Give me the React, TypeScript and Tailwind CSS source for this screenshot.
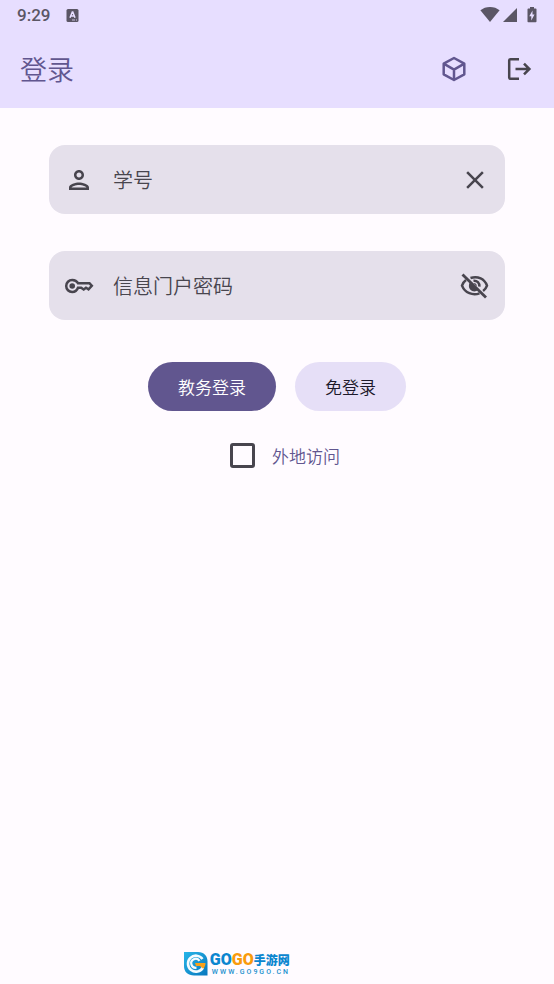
import { useState } from 'react';
import type { ReactNode } from 'react';

const ICONS = {
  person:
    'M12 6c1.100 0 2 .9 2 2s-.9 2-2 2-2-.9-2-2 .9-2 2-2m0 10c2.700 0 5.800 1.290 6 2H6c.23-.72 3.310-2 6-2m0-12C9.790 4 8 5.790 8 8s1.790 4 4 4 4-1.790 4-4-1.790-4-4-4zm0 10c-2.670 0-8 1.340-8 4v2h16v-2c0-2.660-5.330-4-8-4z',
  close:
    'M19 6.410 17.590 5 12 10.590 6.410 5 5 6.410 10.590 12 5 17.590 6.410 19 12 13.410 17.590 19 19 17.590 13.410 12z'
};

function App() {
  const [studentId, setStudentId] = useState('');
  const [password, setPassword] = useState('');
  const [showPassword, setShowPassword] = useState(false);
  const [remote, setRemote] = useState(false);

  return (
    <div className="flex min-h-screen flex-col bg-[#fffbff] font-['Noto_Sans_CJK_SC',sans-serif] font-[350] text-[#48454e]">
      <header className="bg-[#e7deff]">
        <StatusBar />
        <div className="flex h-[78px] items-center justify-between pr-5 pl-5">
          <h1 className="text-[27px] leading-8 text-[#61568f]">登录</h1>
          <div className="flex items-center gap-[35px]">
            <button type="button" aria-label="模块" className="text-[#61568f]">
              <CubeIcon />
            </button>
            <button type="button" aria-label="退出">
              <ExitIcon />
            </button>
          </div>
        </div>
      </header>

      <main className="px-[49px] pt-[37px]">
        <form onSubmit={(e) => e.preventDefault()}>
          <div className="flex flex-col gap-[37px]">
            <Field
              id="student"
              label="学号"
              value={studentId}
              onChange={setStudentId}
              icon={<MaterialIcon path={ICONS.person} />}
              action={
                <button
                  type="button"
                  aria-label="清空"
                  onClick={() => setStudentId('')}
                >
                  <MaterialIcon path={ICONS.close} />
                </button>
              }
            />
            <Field
              id="password"
              label="信息门户密码"
              type={showPassword ? 'text' : 'password'}
              value={password}
              onChange={setPassword}
              icon={<KeyIcon />}
              action={
                <button
                  type="button"
                  aria-label="显示密码"
                  onClick={() => setShowPassword(!showPassword)}
                >
                  <EyeOffIcon />
                </button>
              }
            />
          </div>

          <div className="mt-[42px] flex justify-center gap-[19px] text-[17px]">
            <button
              type="submit"
              className="h-[49px] rounded-full bg-[#61568f] px-[30px] text-white"
            >
              教务登录
            </button>
            <button
              type="button"
              className="h-[49px] rounded-full bg-[#e6dff7] px-[30px] text-[#1c192b]"
            >
              免登录
            </button>
          </div>

          <div className="mt-8 flex items-center justify-center gap-[17px] pl-4">
            <input
              id="remote"
              type="checkbox"
              checked={remote}
              onChange={(e) => setRemote(e.target.checked)}
              className="size-[25px] appearance-none rounded-[3px] border-[3px] border-[#48454e] checked:bg-[#61568f]"
            />
            <label htmlFor="remote" className="text-[17px] leading-6 text-[#61568f]">
              外地访问
            </label>
          </div>
        </form>
      </main>

      <footer className="mt-auto pb-2 pl-[33%]">
        <SiteLogo />
      </footer>
    </div>
  );
}

export default App;

function StatusBar() {
  return (
    <div className="flex h-[30px] items-center justify-between pr-[17px] pl-[17px] text-[#5b5665]">
      <div className="flex items-center gap-4">
        <span className="font-['Roboto',sans-serif] text-[17px] leading-5 font-medium">
          9:29
        </span>
        <svg width="13" height="13" viewBox="0 0 13 13" fill="none">
          <rect x="0.500" width="12" height="13" rx="1.500" fill="currentColor" />
          <path
            d="M4 8.800 6.300 3h.5L9 8.800M4.900 7h3.300"
            stroke="#e7deff"
            strokeWidth="1.500"
          />
          <path d="M6 11h3M10 11h1" stroke="#e7deff" strokeWidth="0.800" />
        </svg>
      </div>
      <div className="flex items-center">
        <svg width="20" height="16" viewBox="0 0 20 16" fill="currentColor">
          <path d="M10 15 .4 3.300C3 1.200 6.300 0 10 0s7 1.200 9.600 3.300z" />
        </svg>
        <svg className="ml-[3px]" width="15" height="16" viewBox="0 0 15 16" fill="currentColor">
          <path d="M0 15 14 1v14z" />
        </svg>
        <svg className="ml-[9px]" width="10" height="16" viewBox="0 0 10 16">
          <path
            d="M3 0h4v1.500h1.700c.5 0 .8.4.8.8v12.200c0 .5-.4.8-.8.8H1.300c-.5 0-.8-.4-.8-.8V2.300c0-.5.4-.8.8-.8H3z"
            fill="currentColor"
          />
          <path d="M5.500 3.500v4h2L4.300 13.500V9.300h-2z" fill="#e7deff" />
        </svg>
      </div>
    </div>
  );
}

type FieldProps = {
  id: string;
  label: string;
  type?: string;
  value: string;
  onChange: (value: string) => void;
  icon: ReactNode;
  action: ReactNode;
};

function Field({ id, label, type = 'text', value, onChange, icon, action }: FieldProps) {
  return (
    <div className="flex h-[69px] items-center rounded-2xl bg-[#e5e0eb] px-[15px]">
      <label htmlFor={id} aria-label={label} className="shrink-0">
        {icon}
      </label>
      <input
        id={id}
        type={type}
        value={value}
        placeholder={label}
        onChange={(e) => onChange(e.target.value)}
        className="mr-5 ml-[19px] min-w-0 flex-1 text-[20px] leading-7 outline-none placeholder:text-[#48454e]"
      />
      {action}
    </div>
  );
}

function MaterialIcon({ path }: { path: string }) {
  return (
    <svg width="30" height="30" viewBox="0 0 24 24" fill="currentColor">
      <path d={path} />
    </svg>
  );
}

function KeyIcon() {
  return (
    <svg width="30" height="30" viewBox="0 0 30 30" fill="none" stroke="currentColor">
      <path
        d="M14 12.200h11.500l2.300 2.600-3.300 3.500-2.500-1.500-2.300 1.700-2.500-1.700h-3.200C13.200 19 11 21 8.200 21a6 6 0 1 1 0-12c2.600 0 4.800 1.300 5.800 3.200z"
        strokeWidth="2.500"
      />
      <circle cx="8.200" cy="15" r="2.800" fill="currentColor" stroke="none" />
    </svg>
  );
}

function EyeOffIcon() {
  return (
    <svg
      width="30"
      height="30"
      viewBox="0 0 30 30"
      fill="none"
      stroke="currentColor"
      strokeWidth="2.500"
    >
      <path d="M10.500 7C18 4.600 24.500 8 27 14.600c-.8 2.300-2 4-3.900 5.400M6 9C4 10.500 2.800 12.300 2 14.600c3 7.500 10.800 10.200 17.500 7.700" />
      <path d="M13.500 9.700c3.600-.3 6.200 2.300 5.900 5.900" />
      <path
        d="M9.800 11.500 18 19.300c-4.500 3-9.900-.5-9-5.600.1-.8.400-1.500.8-2.200zM13.500 12c2-.2 3.500 1.300 3.300 3.300z"
        fill="currentColor"
        stroke="none"
      />
      <path d="m2.500 3.500 23.500 23" strokeWidth="2.800" />
    </svg>
  );
}

function CubeIcon() {
  return (
    <svg
      width="30"
      height="30"
      viewBox="0 0 30 30"
      fill="none"
      stroke="currentColor"
      strokeWidth="2.500"
      strokeLinejoin="round"
    >
      <path d="m15 4 10.300 5.700v10.600L15 26 4.700 20.300V9.700zM4.700 9.700 15 15.600l10.300-5.900M15 15.600V26" />
    </svg>
  );
}

function ExitIcon() {
  return (
    <svg
      width="30"
      height="30"
      viewBox="0 0 30 30"
      fill="none"
      stroke="currentColor"
      strokeWidth="2.500"
    >
      <path d="M15 5.200H6.500c-.8 0-1.300.5-1.300 1.300v17c0 .8.5 1.300 1.300 1.300H15M11.500 15h13.500M20 9.600l5.400 5.400-5.400 5.400" />
    </svg>
  );
}

function SiteLogo() {
  return (
    <div className="flex items-center gap-0.5">
      <svg width="25" height="25" viewBox="0 0 25 25" fill="none">
        <defs>
          <linearGradient id="badge" x1="0" y1="0" x2="1" y2="1">
            <stop offset="0" stopColor="#27b5e8" />
            <stop offset="1" stopColor="#0876bd" />
          </linearGradient>
        </defs>
        <path
          d="M1 1h14c6 0 9.500 4 9.500 9.500V24.500H11C5 24.500 1 21 1 15z"
          fill="url(#badge)"
        />
        <path
          d="M19.500 8A8 8 0 1 0 20 16.500"
          stroke="#f4fbff"
          strokeWidth="2.600"
        />
        <path
          d="M16.500 9.800a4.500 4.500 0 1 0-3 6.900"
          stroke="#f4fbff"
          strokeWidth="2.200"
        />
        <path d="M12 12h10.500c0 2.400-.8 4-2.300 5.800L17 15h-4z" fill="#f9a11b" />
      </svg>
      <div className="flex flex-col">
        <div className="flex items-center leading-[19px] font-black">
          <span className="font-['Roboto',sans-serif] text-[16px] text-[#0b86cf]">GO</span>
          <span className="font-['Roboto',sans-serif] text-[16px] text-[#f99b0c]">GO</span>
          <span className="text-[12px] text-[#0b86cf]">手游网</span>
        </div>
        <span className="pl-0.5 font-['Roboto',sans-serif] text-[7px] leading-[7px] font-medium tracking-[2px] text-[#1a90ce]">
          WWW.GO9GO.CN
        </span>
      </div>
    </div>
  );
}
